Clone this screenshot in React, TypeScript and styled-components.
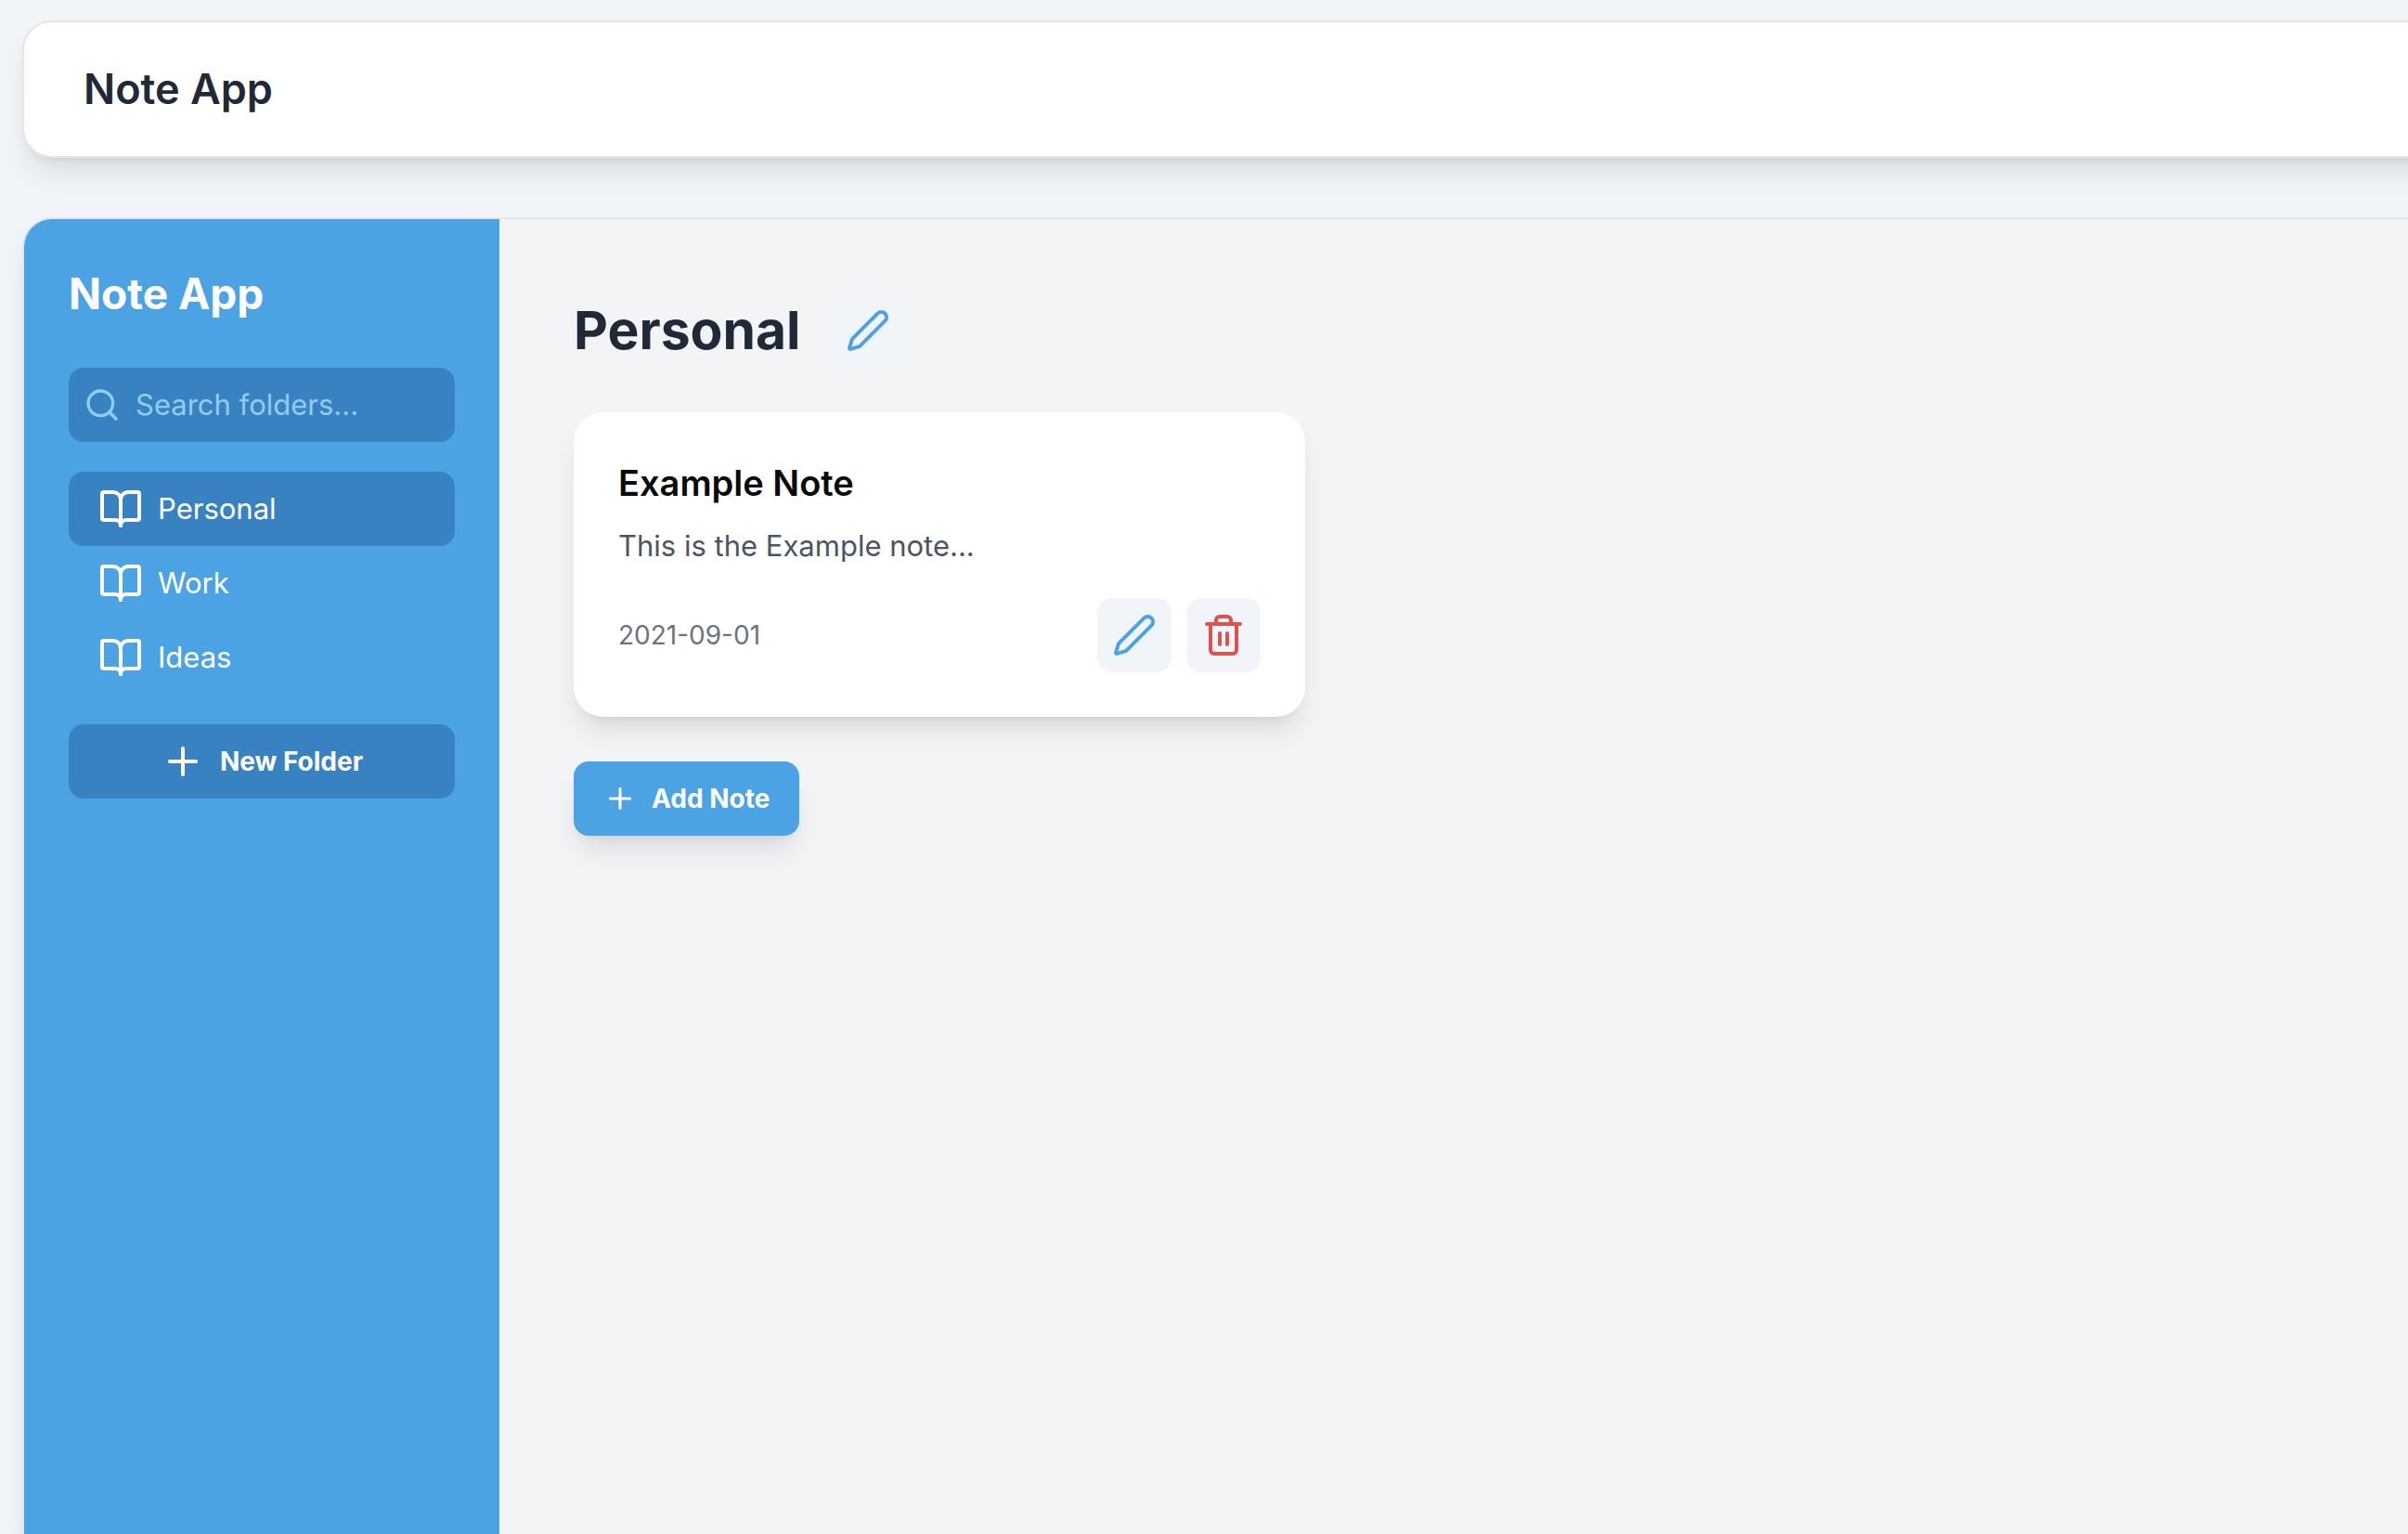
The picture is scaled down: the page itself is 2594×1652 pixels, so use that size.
import React, { useState } from "react";
import styled, { createGlobalStyle, css } from "styled-components";
import { BookOpen, Pen, Plus, Search, Trash2 } from "lucide-react";

const GlobalStyle = createGlobalStyle`
  *, *::before, *::after { box-sizing: border-box; }
  body {
    margin: 0;
    background: #f1f5fa;
    color: #0a0a0a;
    font-family: Inter, "Liberation Sans", sans-serif;
    -webkit-font-smoothing: antialiased;
  }
  h1, h2, h3, p, ul { margin: 0; padding: 0; }
  button, input { font-family: inherit; border: 0; }
  button { cursor: pointer; }
`;

const softShadow = css`
  box-shadow: 0 20px 30px -6px rgba(0, 0, 0, 0.1), 0 8px 12px -8px rgba(0, 0, 0, 0.1);
`;

const Page = styled.div`
  display: flex;
  flex-direction: column;
  gap: 64px;
  height: 100vh;
  padding: 22px 0 0 24px;
  overflow: hidden;
`;

/* Both panels run on past the right edge of the window. */
const panel = css`
  margin-right: -64px;
  border: 2px solid #e5e5e5;
  ${softShadow}
`;

const TopBar = styled.header`
  ${panel}
  flex: none;
  padding: 40px 64px;
  border-radius: 32px;
  background: #fff;
`;

const TopTitle = styled.h1`
  color: #1f2937;
  font-size: 45px;
  font-weight: 600;
  line-height: 64px;
`;

const Workspace = styled.div`
  ${panel}
  display: flex;
  flex: 1;
  border-bottom: 0;
  border-radius: 32px 32px 0 0;
  background: #f3f4f6;
  overflow: hidden;
`;

const Sidebar = styled.aside`
  display: flex;
  flex: none;
  flex-direction: column;
  width: 512px;
  padding: 48px;
  background: #4ba3e3;
  color: #fff;
`;

const SidebarTitle = styled.h2`
  margin-bottom: 48px;
  font-size: 46px;
  font-weight: 700;
  line-height: 64px;
`;

const SearchBox = styled.label`
  display: flex;
  align-items: center;
  gap: 16px;
  height: 80px;
  padding: 0 16px;
  border-radius: 16px;
  background: #3982c2;
  color: #90cdf4;
`;

const SearchInput = styled.input`
  flex: 1;
  min-width: 0;
  padding: 0;
  background: transparent;
  color: #fff;
  font-size: 31px;
  line-height: 48px;
  outline: none;

  &::placeholder { color: #90cdf4; opacity: 1; }
`;

const FolderList = styled.ul`
  margin: 32px 0;
  list-style: none;
`;

const FolderButton = styled.button<{ $active: boolean }>`
  display: flex;
  align-items: center;
  gap: 16px;
  width: 100%;
  height: 80px;
  padding: 0 32px;
  border-radius: 16px;
  background: ${({ $active }) => ($active ? "#3982c2" : "transparent")};
  color: #fff;
  font-size: 31px;
  line-height: 48px;
`;

const ActionButton = styled.button<{ $raised?: boolean }>`
  display: inline-flex;
  align-items: center;
  justify-content: center;
  gap: 16px;
  height: 80px;
  padding: 0 32px;
  border-radius: 16px;
  background: ${({ $raised }) => ($raised ? "#4ba3e3" : "#3982c2")};
  color: #fff;
  font-size: 28px;
  font-weight: 700;
  line-height: 40px;
  ${({ $raised }) => $raised && softShadow}
`;

const Content = styled.main`
  display: flex;
  flex: 1;
  flex-direction: column;
  align-items: flex-start;
  gap: 48px;
  min-width: 0;
  padding: 80px;
`;

const FolderHeading = styled.div`
  display: flex;
  align-items: center;
  gap: 32px;
`;

const FolderName = styled.h2`
  color: #1f2937;
  font-size: 57px;
  font-weight: 700;
  line-height: 72px;
`;

const IconButton = styled.button<{ $danger?: boolean }>`
  display: flex;
  padding: 16px;
  border-radius: 16px;
  background: #f1f5fa;
  color: ${({ $danger }) => ($danger ? "#dd524c" : "#4ba3e3")};
`;

const NoteCard = styled.article`
  width: 100%;
  max-width: 788px;
  padding: 48px;
  border-radius: 32px;
  background: #fff;
  ${softShadow}
`;

const NoteTitle = styled.h3`
  font-size: 38px;
  font-weight: 600;
  line-height: 56px;
`;

const NoteText = styled.p`
  margin: 16px 0 32px;
  color: #4b5563;
  font-size: 31px;
  line-height: 48px;
`;

const NoteFooter = styled.footer`
  display: flex;
  align-items: center;
  justify-content: space-between;
`;

const NoteDate = styled.time`
  color: #6b7280;
  font-size: 28px;
  line-height: 40px;
`;

const NoteActions = styled.div`
  display: flex;
  gap: 16px;
`;

const folders = ["Personal", "Work", "Ideas"];

export default function App() {
  const [active, setActive] = useState("Personal");
  const [query, setQuery] = useState("");
  const shown = folders.filter((f) => f.toLowerCase().includes(query.toLowerCase()));

  return (
    <>
      <GlobalStyle />
      <Page>
        <TopBar>
          <TopTitle>Note App</TopTitle>
        </TopBar>
        <Workspace>
          <Sidebar>
            <SidebarTitle>Note App</SidebarTitle>
            <SearchBox>
              <Search size={40} aria-hidden />
              <SearchInput
                type="text"
                aria-label="Search folders"
                placeholder="Search folders..."
                value={query}
                onChange={(e) => setQuery(e.target.value)}
              />
            </SearchBox>
            <FolderList>
              {shown.map((name) => (
                <li key={name}>
                  <FolderButton type="button" $active={name === active} onClick={() => setActive(name)}>
                    <BookOpen size={48} aria-hidden />
                    {name}
                  </FolderButton>
                </li>
              ))}
            </FolderList>
            <ActionButton type="button">
              <Plus size={48} aria-hidden />
              New Folder
            </ActionButton>
          </Sidebar>
          <Content>
            <FolderHeading>
              <FolderName>{active}</FolderName>
              <IconButton type="button" aria-label="Rename folder">
                <Pen size={48} aria-hidden />
              </IconButton>
            </FolderHeading>
            <NoteCard>
              <NoteTitle>Example Note</NoteTitle>
              <NoteText>This is the Example note...</NoteText>
              <NoteFooter>
                <NoteDate dateTime="2021-09-01">2021-09-01</NoteDate>
                <NoteActions>
                  <IconButton type="button" aria-label="Edit note">
                    <Pen size={48} aria-hidden />
                  </IconButton>
                  <IconButton type="button" aria-label="Delete note" $danger>
                    <Trash2 size={48} aria-hidden />
                  </IconButton>
                </NoteActions>
              </NoteFooter>
            </NoteCard>
            <ActionButton type="button" $raised>
              <Plus size={36} aria-hidden />
              Add Note
            </ActionButton>
          </Content>
        </Workspace>
      </Page>
    </>
  );
}
